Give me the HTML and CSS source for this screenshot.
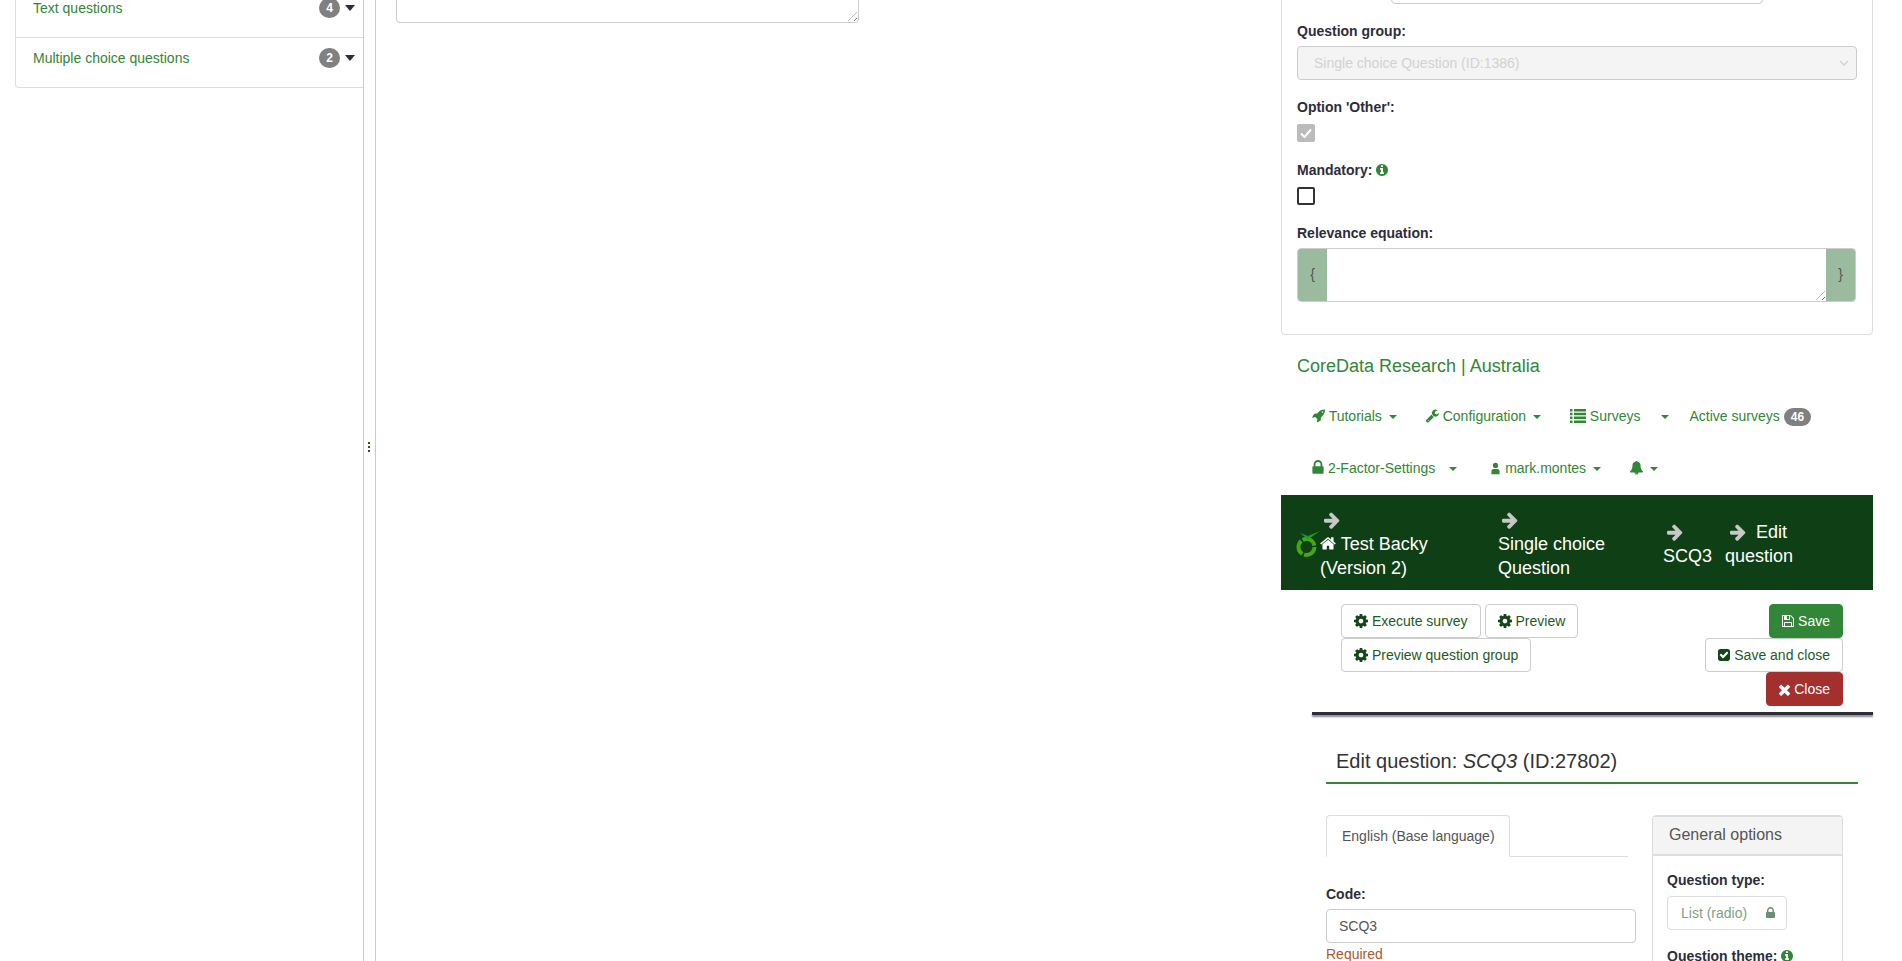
FILE: index.html
```html
<!DOCTYPE html>
<html lang="en">
<head>
<meta charset="utf-8">
<title>Edit question</title>
<link rel="stylesheet" href="styles.css">
</head>
<body>
<svg class="sprite" aria-hidden="true">
  <symbol id="i-cog" viewBox="128 128 1536 1536"><path d="M1152 896q0-106-75-181t-181-75-181 75-75 181 75 181 181 75 181-75 75-181zm512-109v222q0 12-8 23t-20 13l-185 28q-19 54-39 91 35 50 107 138 10 12 10 25t-9 23q-27 37-99 108t-94 71q-12 0-26-9l-138-108q-44 23-91 38-16 136-29 186-7 28-36 28h-222q-14 0-24.500-8.500t-11.500-21.500l-28-184q-49-16-90-37l-141 107q-10 9-25 9-14 0-25-11-126-114-165-168-7-10-7-23 0-12 8-23 15-21 51-66.500t54-70.500q-27-50-41-99l-183-27q-13-2-21-12.500t-8-23.500v-222q0-12 8-23t19-13l186-28q14-46 39-92-40-57-107-138-10-12-10-24 0-10 9-23 26-36 98.500-107.500t94.500-71.500q13 0 26 10l138 107q44-23 91-38 16-136 29-186 7-28 36-28h222q14 0 24.500 8.500t11.500 21.500l28 184q49 16 90 37l142-107q9-9 24-9 13 0 25 10 129 119 165 170 7 8 7 22 0 12-8 23-15 21-51 66.500t-54 70.500q26 50 41 98l183 28q13 2 21 12.500t8 23.500z"/></symbol>
  <symbol id="i-arrow" viewBox="128 128 1536 1536"><path d="M1600 960q0 54-37 91l-651 651q-39 37-91 37-51 0-90-37l-75-75q-38-38-38-91t38-91l293-293h-704q-52 0-84.500-37.500t-32.500-90.500v-128q0-53 32.500-90.500t84.500-37.500h704l-293-294q-38-36-38-90t38-90l75-75q38-38 90-38 53 0 91 38l651 651q37 35 37 90z"/></symbol>
  <symbol id="i-home" viewBox="64 128 1664 1664"><path d="M1472 992v480q0 26-19 45t-45 19h-384v-384h-256v384h-384q-26 0-45-19t-19-45v-480q0-1 .5-3t.5-3l575-474 575 474q1 2 1 6zm223-69l-62 74q-8 9-21 11h-3q-13 0-21-7l-692-577-692 577q-12 8-24 7-13-2-21-11l-62-74q-8-10-7-23.500t11-21.500l719-599q32-26 76-26t76 26l244 204v-195q0-14 9-23t23-9h192q14 0 23 9t9 23v408l219 182q10 8 11 21.500t-7 23.500z"/></symbol>
  <symbol id="i-rocket" viewBox="64 128 1664 1664"><path d="M1504 448q0-40-28-68t-68-28-68 28-28 68 28 68 68 28 68-28 28-68zm224-288q0 249-75.500 430.500t-253.500 360.500q-81 80-195 176l-20 379q-2 16-16 26l-384 224q-7 4-16 4-12 0-23-9l-64-64q-13-14-8-32l85-276-281-281-276 85q-3 1-9 1-14 0-23-9l-64-64q-17-19-5-39l224-384q10-14 26-16l379-20q96-114 176-195 188-187 358-258t431-71q14 0 24 9.500t10 22.500z"/></symbol>
  <symbol id="i-wrench" viewBox="100 128 1626 1626"><path d="M448 1472q0-26-19-45t-45-19-45 19-19 45 19 45 45 19 45-19 19-45zm644-420l-682 682q-37 37-90 37-52 0-91-37l-106-108q-38-36-38-90 0-53 38-91l681-681q39 98 114.500 173.500t173.500 114.500zm634-435q0 39-23 106-47 134-164.500 217.500t-258.500 83.500q-185 0-316.500-131.500t-131.500-316.500 131.500-316.500 316.500-131.500q58 0 121.500 16.500t107.500 46.500q16 11 16 28t-16 28l-293 169v224l193 107q5-3 79-48.500t135.500-81 70.500-35.500q15 0 23.500 10t8.500 25z"/></symbol>
  <symbol id="i-list" viewBox="0 0 16 14"><path d="M0 0h2.500v2.500H0zM4 0h12v2.500H4zM0 3.800h2.500v2.500H0zM4 3.800h12v2.500H4zM0 7.600h2.500v2.500H0zM4 7.600h12v2.500H4zM0 11.400h2.500v2.500H0zM4 11.400h12v2.500H4z"/></symbol>
  <symbol id="i-lock" viewBox="0 0 1152 1536"><path d="M320 640h512V448q0-106-75-181t-181-75-181 75-75 181v192zm832 96v576q0 40-28 68t-68 28H96q-40 0-68-28t-28-68V736q0-40 28-68t68-28h32V448q0-184 132-316T576 0t316 132 132 316v192h32q40 0 68 28t28 68z"/></symbol>
  <symbol id="i-user" viewBox="0 0 12 16"><path d="M6 1a3.200 3.200 0 1 1 0 6.400A3.200 3.200 0 0 1 6 1zM1 15v-3.500C1 9.500 2.500 8.500 4 8.500h4c1.500 0 3 1 3 3V15z"/></symbol>
  <symbol id="i-bell" viewBox="64 128 1664 1664"><path d="M912 1696q0-16-16-16-59 0-101.500-42.500t-42.500-101.500q0-16-16-16t-16 16q0 73 51.500 124.500t124.500 51.500q16 0 16-16zm816-288q0 52-38 90t-90 38h-448q0 106-75 181t-181 75-181-75-75-181h-448q-52 0-90-38t-38-90q50-42 91-88t85-119.500 74.500-158.500 50-206 19.500-260q0-152 117-282.500t307-158.500q-8-19-8-39 0-40 28-68t68-28 68 28 28 68q0 20-8 39 190 28 307 158.500t117 282.500q0 139 19.500 260t50 206 74.500 158.500 85 119.500 91 88z"/></symbol>
  <symbol id="i-times" viewBox="302 302 1188 1252"><path d="M1490 1322q0 40-28 68l-136 136q-28 28-68 28t-68-28l-294-294-294 294q-28 28-68 28t-68-28l-136-136q-28-28-28-68t28-68l294-294-294-294q-28-28-28-68t28-68l136-136q28-28 68-28t68 28l294 294 294-294q28-28 68-28t68 28l136 136q28 28 28 68t-28 68l-294 294 294 294q28 28 28 68z"/></symbol>
  <symbol id="i-check" viewBox="128 128 1536 1536"><path d="M813 1299l614-614q19-19 19-45t-19-45l-102-102q-19-19-45-19t-45 19l-467 467-211-211q-19-19-45-19t-45 19l-102 102q-19 19-19 45t19 45l358 358q19 19 45 19t45-19zm851-883v960q0 119-84.500 203.500t-203.500 84.500h-960q-119 0-203.500-84.500t-84.500-203.500v-960q0-119 84.500-203.500t203.500-84.500h960q119 0 203.500 84.500t84.500 203.500z"/></symbol>
  <symbol id="i-floppy" viewBox="128 128 1536 1536"><path d="M512 1536h768v-384h-768v384zm896 0h128v-896q0-14-10-38.500t-20-34.500l-281-281q-10-10-34-20t-39-10v416q0 40-28 68t-68 28h-576q-40 0-68-28t-28-68v-416h-128v1280h128v-416q0-40 28-68t68-28h832q40 0 68 28t28 68v416zm-384-928v-320q0-13-9.500-22.500t-22.500-9.500h-192q-13 0-22.500 9.500t-9.500 22.500v320q0 13 9.500 22.500t22.500 9.500h192q13 0 22.500-9.500t9.500-22.500zm640 32v928q0 40-28 68t-68 28h-1344q-40 0-68-28t-28-68v-1344q0-40 28-68t68-28h928q40 0 88 20t76 48l280 280q28 28 48 76t20 88z"/></symbol>
  <symbol id="i-info" viewBox="128 128 1536 1536"><path d="M1152 1376v-160q0-14-9-23t-23-9h-96v-512q0-14-9-23t-23-9h-320q-14 0-23 9t-9 23v160q0 14 9 23t23 9h96v320h-96q-14 0-23 9t-9 23v160q0 14 9 23t23 9h448q14 0 23-9t9-23zm-128-896v-160q0-14-9-23t-23-9h-192q-14 0-23 9t-9 23v160q0 14 9 23t23 9h192q14 0 23-9t9-23zm640 416q0 209-103 385.500t-279.500 279.500-385.500 103-385.500-103-279.500-279.500-103-385.500 103-385.500 279.500-279.500 385.500-103 385.500 103 279.500 279.500 103 385.500z"/></symbol>
</svg>

<div class="page">
  <aside class="sidebar">
    <div class="accordion">
      <div class="acc-row">
        <a class="acc-link">Text questions</a>
        <span class="acc-right"><span class="badge">4</span><span class="acc-caret"></span></span>
      </div>
      <div class="acc-row acc-row-last">
        <a class="acc-link">Multiple choice questions</a>
        <span class="acc-right"><span class="badge">2</span><span class="acc-caret"></span></span>
      </div>
    </div>
  </aside>

  <div class="splitter"><span class="grip"></span><span class="grip"></span><span class="grip"></span></div>

  <main class="middle">
    <div class="big-text"><span class="resize-mark"></span></div>
  </main>

  <section class="right">
    <div class="options-panel">
      <div class="stub-input"></div>
      <label class="lbl lbl-first">Question group:</label>
      <div class="select-disabled">
        <span>Single choice Question (ID:1386)</span>
        <svg class="chev" viewBox="0 0 10 6"><path d="M1 1l4 4 4-4" fill="none" stroke="currentColor" stroke-width="1.400"/></svg>
      </div>
      <label class="lbl lbl-gap">Option 'Other':</label>
      <div class="check check-on"><svg viewBox="0 0 18 18"><path d="M4 9.500l3.500 3.500L14 5.500" fill="none" stroke="#fff" stroke-width="2"/></svg></div>
      <label class="lbl lbl-gap2">Mandatory: <svg class="ic ic-info"><use href="#i-info"/></svg></label>
      <div class="check"></div>
      <label class="lbl lbl-gap2">Relevance equation:</label>
      <div class="eq-group">
        <span class="eq-addon">{</span>
        <div class="eq-area"><span class="resize-mark"></span></div>
        <span class="eq-addon">}</span>
      </div>
    </div>

    <nav class="topnav">
      <a class="brand">CoreData Research | Australia</a>
      <div class="nav-row">
        <a class="nav-item"><svg class="ic ic-nav"><use href="#i-rocket"/></svg> Tutorials<span class="caret"></span></a>
        <a class="nav-item"><svg class="ic ic-nav"><use href="#i-wrench"/></svg> Configuration<span class="caret"></span></a>
        <a class="nav-item nav-tight"><svg class="ic ic-list"><use href="#i-list"/></svg> Surveys<span class="caret caret-far"></span></a>
        <a class="nav-item">Active surveys<span class="badge badge-nav">46</span></a>
      </div>
      <div class="nav-row">
        <a class="nav-item nav-tight2"><svg class="ic ic-lock"><use href="#i-lock"/></svg> 2-Factor-Settings<span class="caret caret-mid"></span></a>
        <a class="nav-item"><svg class="ic ic-user"><use href="#i-user"/></svg> mark.montes<span class="caret"></span></a>
        <a class="nav-item"><svg class="ic ic-nav"><use href="#i-bell"/></svg><span class="caret"></span></a>
      </div>
    </nav>

    <div class="crumbs">
      <svg class="logo" viewBox="0 0 24 26">
        <circle cx="10.500" cy="16" r="8" fill="none" stroke="#46a80e" stroke-width="4" stroke-dasharray="15 1.750"/>
        <path d="M4 2l8 3L24 0 12 8.500z" fill="#1d9a2a"/>
      </svg>
      <div class="crumb crumb-a">
        <svg class="ic ic-arrow"><use href="#i-arrow"/></svg>
        <div class="crumb-text"><svg class="ic ic-home"><use href="#i-home"/></svg> Test Backy (Version 2)</div>
      </div>
      <div class="crumb crumb-b">
        <svg class="ic ic-arrow"><use href="#i-arrow"/></svg>
        <div class="crumb-text">Single choice Question</div>
      </div>
      <div class="crumb crumb-c">
        <svg class="ic ic-arrow"><use href="#i-arrow"/></svg>
        <div class="crumb-text">SCQ3</div>
      </div>
      <div class="crumb crumb-d">
        <div class="crumb-line"><svg class="ic ic-arrow"><use href="#i-arrow"/></svg><span>Edit</span></div>
        <div class="crumb-text">question</div>
      </div>
    </div>

    <div class="toolbar">
      <div class="tool-left">
        <a class="btn"><svg class="ic ic-dark"><use href="#i-cog"/></svg> Execute survey</a>
        <a class="btn"><svg class="ic ic-dark"><use href="#i-cog"/></svg> Preview</a>
        <a class="btn"><svg class="ic ic-dark"><use href="#i-cog"/></svg> Preview question group</a>
      </div>
      <div class="tool-right">
        <a class="btn btn-save"><svg class="ic ic-sm"><use href="#i-floppy"/></svg> Save</a>
        <a class="btn"><svg class="ic ic-sm ic-dark"><use href="#i-check"/></svg> Save and close</a>
        <a class="btn btn-close"><svg class="ic ic-xs"><use href="#i-times"/></svg> Close</a>
      </div>
    </div>
    <div class="bar-shadow"></div>

    <h3 class="page-title">Edit question: <em>SCQ3</em> (ID:27802)</h3>

    <div class="editor">
      <div class="editor-main">
        <div class="tabs"><span class="tab">English (Base language)</span></div>
        <label class="lbl lbl-code">Code:</label>
        <div class="text-input">SCQ3</div>
        <div class="required">Required</div>
      </div>
      <div class="general">
        <div class="general-head">General options</div>
        <div class="general-body">
          <label class="lbl">Question type:</label>
          <div class="locked"><span>List (radio)</span><svg class="ic ic-lock2"><use href="#i-lock"/></svg></div>
          <label class="lbl lbl-theme">Question theme: <svg class="ic ic-info"><use href="#i-info"/></svg></label>
        </div>
      </div>
    </div>
  </section>
</div>
</body>
</html>
```

FILE: styles.css
```css
html, body { margin: 0; padding: 0; height: 961px; overflow: hidden; background: #fff; }
body { font-family: "Liberation Sans", Arial, sans-serif; font-size: 14px; line-height: 20px; color: #333; }
* { box-sizing: border-box; }
.sprite { display: none; }
.ic { width: 14px; height: 14px; fill: currentColor; vertical-align: -2px; }

.page { display: flex; height: 961px; overflow: hidden; }

/* left accordion */
.sidebar { width: 364px; flex: none; padding-left: 15px; border-right: 1px solid #ccc; }
.accordion { margin-top: -12px; border-left: 1px solid #ddd; border-bottom: 1px solid #ddd; border-radius: 0 0 0 4px; }
.acc-row { height: 50px; padding: 10px 8px 0 17px; display: flex; justify-content: space-between; border-bottom: 1px solid #ddd; }
.acc-row-last { height: 49px; border-bottom: 0; }
.acc-link { color: #328637; }
.acc-right { display: flex; align-items: flex-start; }
.badge { display: inline-block; min-width: 10px; height: 20px; padding: 3px 7px; border-radius: 10px; background: #808080; color: #fff; font-size: 12px; font-weight: 700; line-height: 14px; text-align: center; }
.acc-caret { width: 0; height: 0; margin: 7px 0 0 5px; border-top: 6px solid #2d2d39; border-left: 5px solid transparent; border-right: 5px solid transparent; }

.splitter { width: 12px; flex: none; padding-top: 442px; display: flex; flex-direction: column; align-items: center; gap: 2px; border-right: 1px solid #ccc; }
.grip { display: block; width: 2px; height: 2px; margin-left: -2px; background: #1d5a25; }

/* middle */
.middle { width: 905px; flex: none; padding-left: 20px; }
.big-text { position: relative; width: 463px; height: 50px; margin-top: -27px; border: 1px solid #ccc; border-radius: 0 0 4px 4px; }
.resize-mark { position: absolute; right: 1px; bottom: 1px; width: 9px; height: 9px; background: repeating-linear-gradient(135deg, transparent 0 2px, #777 2px 3px, transparent 3px 4px); clip-path: polygon(100% 0, 100% 100%, 0 100%); }

/* right column */
.right { width: 592px; flex: none; }
.options-panel { height: 375px; margin-top: -40px; padding: 0 15px; border: 1px solid #ddd; border-radius: 0 0 4px 4px; }
.stub-input { width: 372px; height: 34px; margin: 9px 0 0 94px; border: 1px solid #ccc; border-radius: 4px; }
.lbl { display: block; font-weight: 700; color: #2d2d39; }
.lbl-first { margin-top: 17px; }
.lbl-gap { margin-top: 17px; }
.lbl-gap2 { margin-top: 18px; }
.ic-info { width: 12px; height: 12px; color: #328637; vertical-align: -1px; }
.select-disabled { height: 34px; width: 560px; margin-top: 5px; padding: 6px 16px; display: flex; justify-content: space-between; align-items: center; background: #f4f4f4; border: 1px solid #ccc; border-radius: 4px; color: #d2d2d2; }
.chev { width: 10px; height: 6px; margin-right: -9px; color: #d2d2d2; }
.check { width: 18px; height: 18px; margin-top: 7px; border: 2px solid #333; border-radius: 2px; }
.check-on { background: #bbb; border-color: #bbb; }
.check-on svg { display: block; width: 18px; height: 18px; margin: -2px; }
.eq-group { display: flex; width: 559px; height: 54px; margin-top: 5px; border: 1px solid #ccc; border-radius: 4px; overflow: hidden; }
.eq-addon { width: 29px; flex: none; background: #9bbb9e; color: #555; padding-top: 15px; text-align: center; }
.eq-area { flex: 1; position: relative; background: #fff; }

.topnav { height: 160px; padding-top: 21px; }
.brand { display: block; padding-left: 16px; font-size: 18px; line-height: 20px; color: #328637; }
.nav-row { display: flex; height: 52px; padding-left: 16px; align-items: center; }
.topnav .brand + .nav-row { margin-top: 14px; }
.nav-item { padding: 0 14px 0 15px; color: #328637; white-space: nowrap; }
.nav-tight { padding-right: 5px; }
.nav-tight2 { padding-right: 18px; }
.ic-nav { width: 13px; height: 14px; }
.ic-list { width: 16px; height: 14px; }
.ic-lock { width: 12px; height: 15px; }
.ic-user { width: 11px; height: 13px; }
.caret { display: inline-block; width: 0; height: 0; margin-left: 7px; vertical-align: 2px; border-top: 4px solid #328637; border-left: 4px solid transparent; border-right: 4px solid transparent; }
.caret-far { margin-left: 21px; }
.caret-mid { margin-left: 14px; }
.badge-nav { height: 18px; margin-left: 4px; vertical-align: middle; padding: 2px 7px; }

.crumbs { display: flex; height: 95px; align-items: center; padding: 2px 0 0 15px; background: #0f3f14; color: #fff; font-size: 18px; line-height: 24px; }
.logo { width: 24px; height: 26px; flex: none; margin-top: 1px; }
.crumb { flex: none; }
.crumb-a { width: 130px; }
.crumb-b { width: 120px; margin-left: 48px; }
.crumb-c { width: 50px; margin-left: 45px; }
.crumb-d { width: 70px; margin-left: 12px; }
.ic-arrow { display: block; width: 16px; height: 24px; color: #c8c8c8; margin-left: 4px; }
.ic-home { width: 16px; height: 16px; }
.crumb-a .crumb-text { width: 110px; }
.crumb-b .crumb-text { width: 120px; }
.crumb-line { display: flex; gap: 10px; margin-left: 1px; }
.crumb-line .ic-arrow { margin-left: 4px; }

.toolbar { display: flex; justify-content: space-between; height: 122px; padding: 14px 30px 0 60px; }
.tool-left { display: flex; flex-wrap: wrap; align-content: flex-start; width: 300px; column-gap: 4px; }
.tool-right { display: flex; flex-direction: column; align-items: flex-end; }
.btn { display: inline-block; height: 34px; padding: 6px 12px; border: 1px solid #ccc; border-radius: 4px; background: #fff; color: #1f5a26; white-space: nowrap; }
.ic-dark { color: #14451b; }
.ic-sm { width: 12px; height: 12px; vertical-align: -1px; }
.ic-xs { width: 11px; height: 12px; vertical-align: -2px; }
.btn-save { background: #328637; border-color: #328637; color: #fff; }
.btn-close { background: #a4302e; border-color: #a4302e; color: #fff; }
.bar-shadow { height: 3px; margin: 0 0 0 31px; background: #2d2d39; box-shadow: 0 2px 2px #888; }

.page-title { margin: 33px 15px 0 45px; height: 36px; padding: 0 10px; font-size: 20px; font-weight: 400; line-height: 26px; border-bottom: 2px solid #328637; }

.editor { display: flex; margin-top: 31px; padding-left: 45px; column-gap: 16px; }
.editor-main { width: 310px; }
.tabs { width: 302px; height: 42px; border-bottom: 1px solid #ddd; }
.tab { display: block; width: 184px; height: 42px; padding: 10px 15px; border: 1px solid #ddd; border-bottom-color: #fff; border-radius: 4px 4px 0 0; color: #555; white-space: nowrap; }
.lbl-code { margin-top: 27px; }
.text-input { height: 34px; margin-top: 5px; padding: 6px 12px; border: 1px solid #ccc; border-radius: 4px; color: #555; }
.required { margin-top: 1px; color: #b0572b; }
.general { width: 191px; height: 200px; border: 1px solid #ddd; border-radius: 4px; }
.general-head { height: 40px; padding: 8px 15px 0 16px; background: #f4f4f4; border: 1px solid #ddd; border-width: 1px 0 2px; font-size: 16px; color: #555; }
.general-body { padding: 14px 14px; }
.locked { display: flex; justify-content: space-between; align-items: center; width: 120px; height: 34px; margin-top: 6px; padding: 0 11px 0 13px; border: 1px solid #ddd; border-radius: 4px; color: #7fa283; }
.ic-lock2 { width: 9px; height: 12px; color: #6d8f71; }
.lbl-theme { margin-top: 16px; }
```
